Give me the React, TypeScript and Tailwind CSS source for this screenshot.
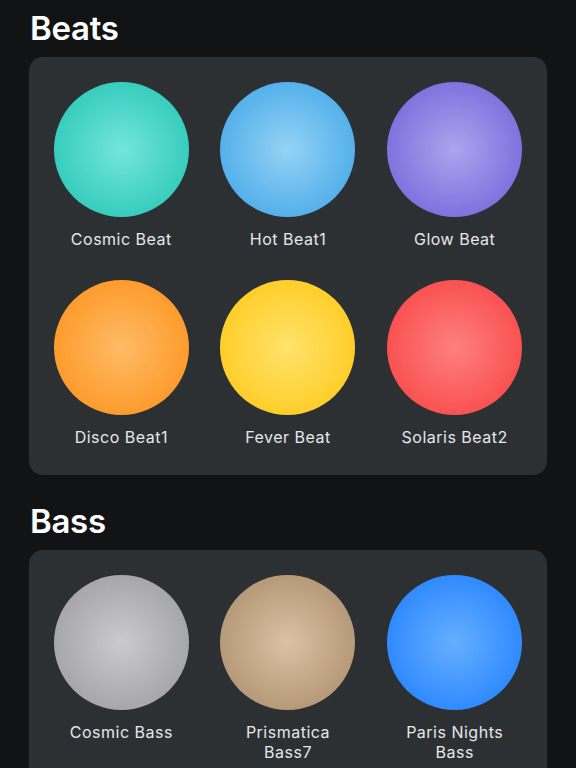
type Pad = { name: string; from: string; to: string };

const beats: Pad[] = [
  { name: "Cosmic Beat", from: "#74e6da", to: "#1ec3b3" },
  { name: "Hot Beat1", from: "#95d3f6", to: "#3aa2e6" },
  { name: "Glow Beat", from: "#aca5ee", to: "#6c5dd7" },
  { name: "Disco Beat1", from: "#ffbb66", to: "#fd8f15" },
  { name: "Fever Beat", from: "#ffe36c", to: "#ffc50f" },
  { name: "Solaris Beat2", from: "#ff8080", to: "#f73e3e" },
];

const bass: Pad[] = [
  { name: "Cosmic Bass", from: "#cbcbcd", to: "#98989b" },
  { name: "Prismatica Bass7", from: "#dcc2a3", to: "#a68867" },
  { name: "Paris Nights Bass", from: "#66afff", to: "#1a7bff" },
];

function PadTile({ pad }: { pad: Pad }) {
  return (
    <div className="flex flex-col items-center">
      <div
        className="h-[135px] w-[135px] rounded-full"
        style={{ background: `radial-gradient(circle at 50% 50%, ${pad.from} 0%, ${pad.to} 100%)` }}
      />
      <div className="mt-[12px] w-[130px] text-center text-[16px] leading-[20px] tracking-[0.5px] text-[#e6e7e8]">
        {pad.name}
      </div>
    </div>
  );
}

function Section({ title, pads }: { title: string; pads: Pad[] }) {
  return (
    <section>
      <h2 className="pl-[1px] text-[33px] font-semibold leading-[40px] tracking-[-0.3px] text-white">{title}</h2>
      <div className="mt-[9px] grid grid-cols-3 gap-y-[31px] rounded-[14px] bg-[#2c3033] px-[9px] pb-[28px] pt-[25px]">
        {pads.map((p) => (
          <PadTile key={p.name} pad={p} />
        ))}
      </div>
    </section>
  );
}

export default function App() {
  return (
    <div
      className="h-[768px] w-[576px] overflow-hidden bg-[#121314] pl-[29px] pr-[29px] pt-[8px]"
      style={{ fontFamily: "Inter, 'Noto Sans', sans-serif" }}
    >
      <div className="flex flex-col gap-[26px]">
        <Section title="Beats" pads={beats} />
        <Section title="Bass" pads={bass} />
      </div>
    </div>
  );
}
